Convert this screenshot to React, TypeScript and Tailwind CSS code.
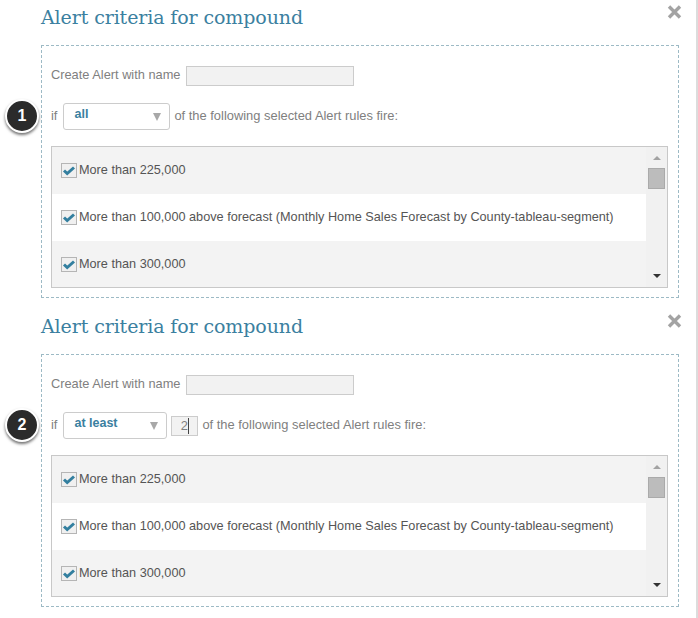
const rules = [
  'More than 225,000',
  'More than 100,000 above forecast (Monthly Home Sales Forecast by County-tableau-segment)',
  'More than 300,000',
]

function CheckBox() {
  return (
    <span className="flex h-[15px] w-4 shrink-0 items-center justify-center border border-[#b5b5b5] bg-[#f0f0f0]">
      <svg width="14" height="12" viewBox="0 0 14 12">
        <path d="M2 5.5 L5.2 8.5 L12 2.5" fill="none" stroke="#337f9f" strokeWidth="3" />
      </svg>
    </span>
  )
}

function AlertPanel({ num, mode, count }: { num: number; mode: string; count?: number }) {
  return (
    <section className="relative h-[309px] pl-[41px]">
      <h2 className="h-[45px] pt-[3px] font-['DejaVu_Serif',serif] text-[19px] leading-[28px] tracking-[-0.11px] text-[#3b80a0]">
        Alert criteria for compound
      </h2>
      <button className="absolute left-[667px] top-[5px]">
        <svg width="15" height="14" viewBox="0 0 15 14" className="block">
          <path d="M2 1.5 L13 12.5 M13 1.5 L2 12.5" stroke="#a3a3a3" strokeWidth="3.4" />
        </svg>
      </button>

      <div className="h-[253px] w-[638px] border border-dashed border-[#9dbac5] px-[9px] pt-[20px]">
        <div className="flex h-[20px] items-center gap-[6px] text-[12.8px]">
          <span className="-mt-[2px]">Create Alert with name</span>
          <div className="h-[20px] w-[168px] border border-[#cccccc] bg-[#f2f2f2]" />
        </div>

        <div className="mt-[17px] flex h-[27px] items-center text-[12.9px]">
          <span className="-mt-[2px] mr-[6px]">if</span>
          <div className={`flex h-[27px] items-center justify-between rounded-[3px] border border-[#cccccc] pl-[10px] pr-[8px] ${count ? 'w-[104px]' : 'w-[107px]'}`}>
            <span className="-mt-[4px] text-[12.5px] font-bold text-[#3b80a0]">{mode}</span>
            <span className="h-0 w-0 border-x-[4px] border-t-[8px] border-x-transparent border-t-[#a8a8a8]" />
          </div>
          {count ? (
            <div className="ml-[4px] flex h-[20px] w-[27px] items-center justify-center border border-[#cccccc] bg-[#f2f2f2]">
              <span className="border-r border-[#444444] leading-[16px]">{count}</span>
            </div>
          ) : null}
          <span className="-mt-[2px] ml-[4px]">of the following selected Alert rules fire:</span>
        </div>

        <div className="mt-[16px] flex h-[142px] w-[617px] overflow-hidden border border-[#c8c8c8]">
          <ul className="flex-1">
            {rules.map((rule, i) => (
              <li key={rule} className={`flex h-[47px] items-center gap-[2px] pl-[9px] text-[12.7px] text-[#555555] ${i % 2 === 0 ? 'bg-[#f3f3f3]' : 'bg-white'}`}>
                <CheckBox />
                <span>{rule}</span>
              </li>
            ))}
          </ul>
          <div className="flex w-[21px] flex-col items-center bg-[#f1f1f1] pt-[9px]">
            <span className="h-0 w-0 border-x-[4px] border-b-[4px] border-x-transparent border-b-[#a3a3a3]" />
            <span className="mt-[8px] h-[21px] w-[17px] border border-[#aaaaaa] bg-[#bcbcbc]" />
            <span className="mt-auto mb-[9px] h-0 w-0 border-x-[4px] border-t-[4px] border-x-transparent border-t-[#333333]" />
          </div>
        </div>
      </div>

      <div className="absolute left-[5px] top-[99px] flex h-[34px] w-[34px] items-center justify-center rounded-full border-2 border-white bg-[#2b2b2b] text-[16px] font-bold text-white shadow-[0_2px_3px_rgba(0,0,0,0.55)]">
        {num}
      </div>
    </section>
  )
}

export default function App() {
  return (
    <div className="relative h-[618px] w-[698px] overflow-hidden border-r-2 border-[#dcdcdc] bg-white font-['Liberation_Sans',sans-serif] text-[#808080]">
      <AlertPanel num={1} mode="all" />
      <AlertPanel num={2} mode="at least" count={2} />
    </div>
  )
}
